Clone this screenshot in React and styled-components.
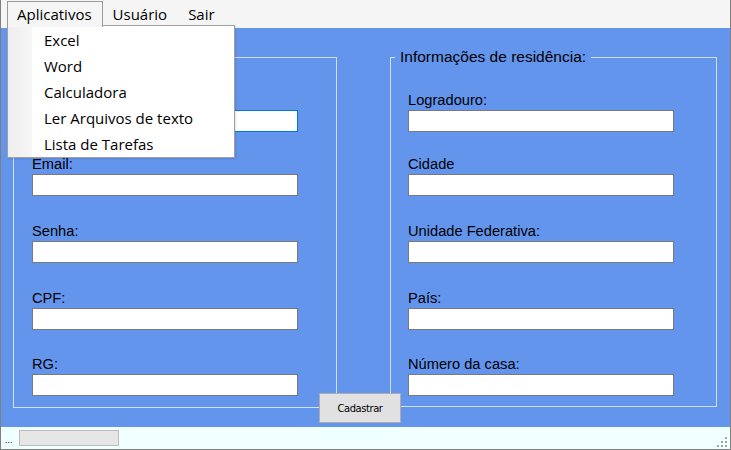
import React from "react";
import styled, { createGlobalStyle } from "styled-components";

const GlobalStyle = createGlobalStyle`
  html, body {
    margin: 0;
    padding: 0;
    background: #ffffff;
  }
  * {
    box-sizing: border-box;
  }
`;

const Window = styled.div`
  position: relative;
  width: 731px;
  height: 450px;
  display: flex;
  flex-direction: column;
  border: 1px solid #7f7f7f;
  border-top: none;
  background: #6495ed;
  font-family: "Liberation Sans", Arial, sans-serif;
  overflow: hidden;
`;

const MenuBar = styled.div`
  position: relative;
  z-index: 10;
  height: 28px;
  display: flex;
  align-items: flex-start;
  padding-left: 6px;
  background: #f5f5f5;
  font-family: "Open Sans", "Noto Sans", sans-serif;
  font-size: 15px;
  color: #000;
`;

const MenuItem = styled.div`
  position: relative;
  z-index: 2;
  margin-top: 1px;
  height: ${(p) => (p.$open ? "26px" : "24px")};
  line-height: 25px;
  padding: 0 10px 0 9px;
  border: 1px solid ${(p) => (p.$open ? "#9a9a9a" : "transparent")};
  border-bottom: none;
  background: #f5f5f5;
`;

const Dropdown = styled.div`
  position: absolute;
  left: 6px;
  top: 25px;
  width: 228px;
  padding: 1px 1px 0;
  border: 1px solid #a0a0a0;
  background: linear-gradient(to right, #eeeeee 0, #f6f6f6 24px, #ffffff 24px);
  box-shadow: 1px 1px 2px rgba(0, 0, 0, 0.12);
`;

const DropItem = styled.div`
  height: 26px;
  line-height: 26px;
  padding-left: 35px;
  white-space: nowrap;
`;

const Main = styled.div`
  position: relative;
  flex: 1;
  display: flex;
  align-items: flex-start;
  gap: 53px;
  padding: 20px 0 0 12px;
`;

const GroupBox = styled.fieldset`
  width: ${(p) => p.$w}px;
  height: ${(p) => p.$h}px;
  margin: 0;
  padding: 0;
  min-width: 0;
  border: 1px solid #d3e1f8;
`;

const GroupTitle = styled.legend`
  margin-left: 4px;
  padding: 0 5px;
  font-size: 15.5px;
  line-height: 18px;
  color: #000;
`;

const Fields = styled.div`
  display: flex;
  flex-direction: column;
  padding: 26px 0 0 ${(p) => p.$inset}px;
`;

const Field = styled.div`
  display: flex;
  flex-direction: column;
  margin-top: ${(p) => p.$space}px;
`;

const Label = styled.label`
  height: 17px;
  margin-bottom: 1px;
  font-size: 14.67px;
  line-height: 16px;
  color: #000;
`;

const TextBox = styled.input`
  width: 266px;
  height: 22px;
  margin: 0;
  padding: 0 3px;
  border: 1px solid ${(p) => (p.$focused ? "#0078d7" : "#7a7a7a")};
  background: #ffffff;
  outline: none;
  font-family: inherit;
  font-size: 13px;
`;

const SubmitButton = styled.button`
  position: absolute;
  left: 318px;
  top: 365px;
  width: 82px;
  height: 30px;
  margin: 0;
  padding: 0;
  border: 1px solid #adadad;
  background: #e1e1e1;
  font-family: "DejaVu Sans Condensed", "DejaVu Sans", sans-serif;
  font-size: 11px;
  letter-spacing: -0.4px;
  color: #000;
`;

const StatusBar = styled.div`
  height: 22px;
  display: flex;
  align-items: center;
  padding-left: 4px;
  background: #f0ffff;
`;

const StatusText = styled.span`
  font-size: 9px;
  line-height: 9px;
  margin-top: 4px;
  color: #000;
`;

const Progress = styled.div`
  width: 100px;
  height: 16px;
  margin-left: 6px;
  border: 1px solid #bcbcbc;
  background: #e6e6e6;
`;

const Grip = styled.svg`
  align-self: flex-end;
  margin: 0 2px 1px auto;
`;

const spacing = [0, 24, 27, 27, 26];
const personal = ["Nome:", "Email:", "Senha:", "CPF:", "RG:"];
const residence = ["Logradouro:", "Cidade", "Unidade Federativa:", "País:", "Número da casa:"];
const apps = ["Excel", "Word", "Calculadora", "Ler Arquivos de texto", "Lista de Tarefas"];

export default function App() {
  return (
    <>
      <GlobalStyle />
      <Window>
        <MenuBar>
          <MenuItem $open>Aplicativos</MenuItem>
          <MenuItem>Usuário</MenuItem>
          <MenuItem>Sair</MenuItem>
          <Dropdown>
            {apps.map((a) => (
              <DropItem key={a}>{a}</DropItem>
            ))}
          </Dropdown>
        </MenuBar>

        <Main>
          <GroupBox $w={324} $h={360}>
            <GroupTitle>Informações pessoais:</GroupTitle>
            <Fields $inset={18}>
              {personal.map((l, i) => (
                <Field key={l} $space={spacing[i]}>
                  <Label>{l}</Label>
                  <TextBox $focused={i === 0} />
                </Field>
              ))}
            </Fields>
          </GroupBox>

          <GroupBox $w={327} $h={359}>
            <GroupTitle>Informações de residência:</GroupTitle>
            <Fields $inset={17}>
              {residence.map((l, i) => (
                <Field key={l} $space={spacing[i]}>
                  <Label>{l}</Label>
                  <TextBox />
                </Field>
              ))}
            </Fields>
          </GroupBox>

          <SubmitButton>Cadastrar</SubmitButton>
        </Main>

        <StatusBar>
          <StatusText>...</StatusText>
          <Progress />
          <Grip width="12" height="12" viewBox="0 0 12 12">
            <g fill="#a0a0a0">
              <rect x="9" y="1" width="2" height="2" />
              <rect x="5" y="5" width="2" height="2" />
              <rect x="9" y="5" width="2" height="2" />
              <rect x="1" y="9" width="2" height="2" />
              <rect x="5" y="9" width="2" height="2" />
              <rect x="9" y="9" width="2" height="2" />
            </g>
          </Grip>
        </StatusBar>
      </Window>
    </>
  );
}
